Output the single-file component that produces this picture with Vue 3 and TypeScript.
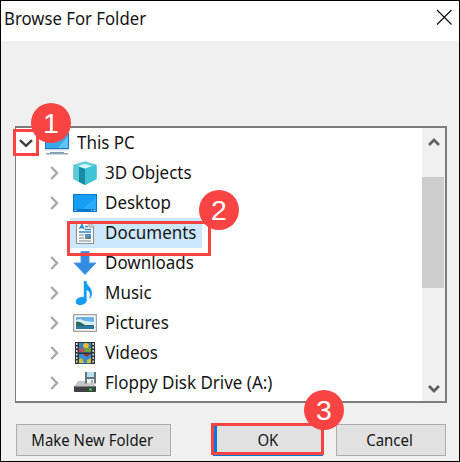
<script setup lang="ts">
interface TreeItem {
  label: string
  icon: string
  expandable: boolean
}

const items: TreeItem[] = [
  { label: '3D Objects', icon: 'objects', expandable: true },
  { label: 'Desktop', icon: 'desktop', expandable: true },
  { label: 'Documents', icon: 'documents', expandable: false },
  { label: 'Downloads', icon: 'downloads', expandable: true },
  { label: 'Music', icon: 'music', expandable: true },
  { label: 'Pictures', icon: 'pictures', expandable: true },
  { label: 'Videos', icon: 'videos', expandable: true },
  { label: 'Floppy Disk Drive (A:)', icon: 'floppy', expandable: true },
]
const selected = 'Documents'
</script>

<template>
  <div class="dialog">
    <header class="titlebar">
      <span class="title">Browse For Folder</span>
      <svg class="close" width="17" height="17" viewBox="0 0 17 17">
        <path d="M1 1L15.5 15.5M15.5 1L1 15.5" stroke="#111" stroke-width="1.2" fill="none" />
      </svg>
    </header>

    <main class="tree">
      <div class="rows">
        <div class="row root">
          <svg class="arrow" width="14" height="14" viewBox="0 0 14 14">
            <path d="M1 4.2L7 9.8L13 4.2" stroke="#404040" stroke-width="2.5" fill="none" />
          </svg>
          <svg class="icon" width="26" height="26" viewBox="0 0 26 26">
            <rect x="1" y="3" width="24" height="16" fill="#1878b8" />
            <rect x="2" y="4" width="22" height="14" fill="#36a8f0" />
            <path d="M14 18L24 6V18Z" fill="#62c2fa" />
            <path d="M1 19h24v1.5H1z" fill="#cfdde5" />
            <path d="M6 22h14v1H6z" fill="#7d9db1" />
            <path d="M2 23h22v1.5H2z" fill="#91a9b7" />
          </svg>
          <span class="label">This PC</span>
        </div>

        <div v-for="item in items" :key="item.label" class="row" :class="{ selected: item.label === selected }">
          <svg class="arrow" width="14" height="14" viewBox="0 0 14 14">
            <path v-if="item.expandable" d="M3.2 1L9 7L3.2 13" stroke="#a8a8a8" stroke-width="2.4" fill="none" />
          </svg>
          <span class="node">
            <svg class="icon" width="26" height="26" viewBox="0 0 26 26">
              <g v-if="item.icon === 'objects'">
                <path d="M1.5 5L13 1.5L24.5 5V19L13 25L1.5 19Z" fill="#27a9bf" />
                <path d="M1.5 5L13 1.5L24.5 5L13 9Z" fill="#63cfdd" />
                <path d="M1.5 5L7 7V22L1.5 19Z" fill="#5ccbd9" />
                <path d="M7 7L13 9V25L7 22Z" fill="#168aa6" />
                <path d="M13 9L24.5 5V19L13 25Z" fill="#3fc4d6" />
                <path d="M6 6L13 4L20 6L13 8.5Z" fill="#d9f8fb" />
              </g>
              <g v-else-if="item.icon === 'desktop'">
                <rect x="1" y="4" width="24" height="18" fill="#0878cc" />
                <rect x="2" y="5" width="22" height="14" fill="#169df4" />
                <path d="M11 19L24 7V19Z" fill="#2badfc" />
                <path d="M2.5 20.3h2M19 20.3h1M21.5 20.3h2" stroke="#c8edff" stroke-width="1" />
              </g>
              <g v-else-if="item.icon === 'documents'">
                <path d="M4.5 2.5H17L21.5 7V23.5H4.5Z" fill="#fdfdfd" stroke="#929292" stroke-width="1.2" />
                <path d="M17 2.5V7H21.5" fill="#ddd" stroke="#929292" />
                <path d="M7.5 9L10 4.5L12 9M8.5 7.5h3" stroke="#2787ce" stroke-width="1.4" fill="none" />
                <path d="M13 6.5h3M13 9.5h6M7 12h12" stroke="#3988c3" stroke-width="1.4" />
                <path d="M7 15h5M7 18h5M7 21h12" stroke="#75838c" stroke-width="1.2" />
                <rect x="13" y="14" width="6" height="5" fill="#4c91c7" />
                <path d="M13 19L16 16.5L19 18V19Z" fill="#61835a" />
              </g>
              <path v-else-if="item.icon === 'downloads'" d="M9 1.5H17V13H24L13 24.5L2 13H9Z" fill="#328be0" stroke="#4c9be5" />
              <g v-else-if="item.icon === 'music'" fill="#149df4">
                <ellipse cx="9.2" cy="21" rx="5.6" ry="4" transform="rotate(-15 9.2 21)" />
                <path d="M11.8 1H14.4C14.7 6 20 7.5 20 13C20 15.8 19 18 17.2 19C19 13 17 11 14.6 10V21H11.8Z" />
              </g>
              <g v-else-if="item.icon === 'pictures'">
                <rect x="1.7" y="4.7" width="22.6" height="16.6" fill="#fff" stroke="#999" stroke-width="1.2" />
                <rect x="4" y="7" width="18" height="12" fill="#68b4e8" />
                <path d="M4 10L8 9L13 11L22 12V15H4Z" fill="#d8eff7" />
                <path d="M4 11.5L8 12L13 15H22V16H4Z" fill="#2d6c5c" />
                <path d="M4 16H22V19H4Z" fill="#2878ab" />
              </g>
              <g v-else-if="item.icon === 'videos'">
                <rect x="3" y="2" width="20" height="22" fill="#303437" />
                <path d="M4.8 3V24M21.2 3V24" stroke="#d5d9da" stroke-width="1.6" stroke-dasharray="2 1.5" />
                <rect x="7" y="3" width="12" height="9.5" fill="#397fba" />
                <rect x="7" y="14" width="12" height="9.5" fill="#348dd0" />
                <path d="M7 9L12 8V12H7Z" fill="#c34c62" />
                <path d="M11 6C11 2 17 2 17 6L15 9H13Z" fill="#eabc32" />
                <path d="M13 8H19V12H12Z" fill="#69a338" />
                <path d="M11 14H18L15 17Z" fill="#a12e23" />
                <path d="M7 19L10 18L12 23H7ZM15 20L19 18V23H15Z" fill="#d3c33e" />
              </g>
              <g v-else>
                <path d="M6 11H20L24 17H2Z" fill="#c2c6c8" />
                <rect x="13" y="2" width="11" height="11.5" fill="#66747f" />
                <rect x="15" y="2" width="7" height="5" fill="#b9dff5" />
                <rect x="15" y="9" width="7" height="4.5" fill="#f2f2f2" />
                <path d="M20 10v3" stroke="#555" />
                <rect x="2" y="16" width="22" height="6" rx=".7" fill="#3d4144" />
                <path d="M3 16.5H23" stroke="#7e8487" />
                <rect x="17" y="18.5" width="3" height="2" fill="#37df44" />
              </g>
            </svg>
            <span class="label">{{ item.label }}</span>
          </span>
        </div>
      </div>
      <aside class="scrollbar">
        <svg class="up" width="12" height="10" viewBox="0 0 12 10"><path d="M1 8L6 3L11 8" /></svg>
        <div class="thumb"></div>
        <svg class="down" width="12" height="10" viewBox="0 0 12 10"><path d="M1 2L6 7L11 2" /></svg>
      </aside>
    </main>

    <footer class="actions">
      <button class="button make"><span>Make New Folder</span></button>
      <button class="button ok"><span>OK</span></button>
      <button class="button cancel"><span>Cancel</span></button>
    </footer>

    <div class="mark mark-arrow"></div>
    <div class="mark mark-documents"></div>
    <div class="mark mark-ok"></div>
    <div class="badge one">1</div>
    <div class="badge two">2</div>
    <div class="badge three">3</div>
  </div>
</template>

<style>
body { margin: 0; }
</style>

<style scoped>
.dialog {
  position: relative;
  box-sizing: border-box;
  width: 460px;
  height: 462px;
  border: 1px solid #000;
  background: #f0f0f0;
  font-family: "Noto Sans", "Open Sans", sans-serif;
  color: #151515;
  overflow: hidden;
}
.titlebar {
  box-sizing: border-box;
  height: 40px;
  padding: 0 6px 0 3px;
  display: flex;
  align-items: flex-start;
  justify-content: space-between;
  background: #fff;
}
.title {
  font-size: 18px;
  line-height: 35px;
  white-space: nowrap;
  transform: scaleX(.93);
  transform-origin: left;
}
.close { margin-top: 8px; }
.tree {
  box-sizing: border-box;
  width: 432px;
  height: 277px;
  margin: 85px 0 0 14px;
  display: flex;
  border: 2px solid #7c7c7c;
  border-left-width: 1px;
  background: #fff;
}
.rows { flex: 1; }
.row { height: 30px; display: flex; align-items: center; padding-left: 32px; }
.root { padding-left: 3px; }
.root .icon { margin-left: 11px; }
.root .label { margin-left: 7px; }
.arrow { flex: none; }
.node { display: flex; align-items: center; height: 30px; margin-left: 8px; padding-left: 2px; }
.icon { flex: none; }
.label {
  margin-left: 7px;
  font-size: 18px;
  line-height: 28px;
  padding-bottom: 2px;
  white-space: nowrap;
  transform: scaleX(.943);
  transform-origin: left;
}
.selected .node { background: #cce8ff; }
.scrollbar {
  width: 23px;
  display: flex;
  flex-direction: column;
  align-items: center;
  background: #f0f0f0;
}
.scrollbar path { fill: none; stroke: #606060; stroke-width: 2.7; }
.up { margin-top: 9px; }
.thumb { width: 22px; height: 111px; margin: 30px 1px 0 0; background: #cdcdcd; }
.down { margin-top: auto; margin-bottom: 7px; }
.actions { display: flex; padding: 21px 0 0 15px; }
.button {
  box-sizing: border-box;
  height: 32px;
  padding: 0 3px 0 0;
  border: 1px solid #adadad;
  background: #e1e1e1;
  color: #151515;
  font: 17px/28px "Noto Sans", "Open Sans", sans-serif;
  white-space: nowrap;
}
.button span { display: inline-block; transform: scaleX(.88); }
.make { width: 155px; padding: 0 3px 0 0; }
.ok { width: 110px; margin-left: 42px; border: 2px solid #0078d7; border-left-width: 4px; }
.cancel { width: 110px; margin-left: 13px; }
.mark { position: absolute; box-sizing: border-box; border: 3px solid #fa4444; }
.mark-arrow { left: 12px; top: 128px; width: 26px; height: 27px; }
.mark-documents { left: 66px; top: 220px; width: 144px; height: 35px; }
.mark-ok { left: 210px; top: 422px; width: 113px; height: 32px; }
.badge {
  position: absolute;
  width: 40px;
  height: 40px;
  border-radius: 50%;
  background: #fa4444;
  color: #fff;
  font: 28.5px/40px "Liberation Sans", Arial, sans-serif;
  text-align: center;
}
.one { left: 30px; top: 102px; }
.two { left: 198px; top: 189px; }
.three { left: 303px; top: 389px; }
</style>
